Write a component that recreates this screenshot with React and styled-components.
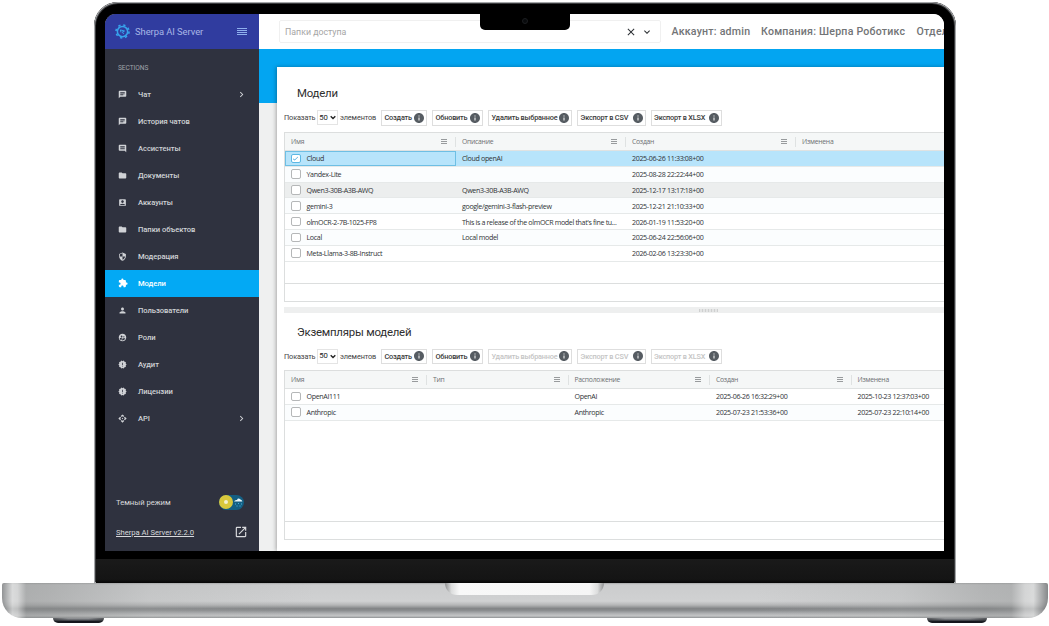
import React from "react";
import styled, { createGlobalStyle, css } from "styled-components";
import {
  MdChat,
  MdComment,
  MdFolder,
  MdAccountBox,
  MdSecurity,
  MdExtension,
  MdPerson,
  MdSupervisedUserCircle,
  MdNewReleases,
  MdApi,
  MdChevronRight,
  MdOpenInNew,
  MdClose,
  MdExpandMore,
  MdInfo,
  MdCheck,
} from "react-icons/md";

const menu = [
  { label: "Чат", icon: MdChat, arrow: true },
  { label: "История чатов", icon: MdChat },
  { label: "Ассистенты", icon: MdComment },
  { label: "Документы", icon: MdFolder },
  { label: "Аккаунты", icon: MdAccountBox },
  { label: "Папки объектов", icon: MdFolder },
  { label: "Модерация", icon: MdSecurity },
  { label: "Модели", icon: MdExtension, active: true },
  { label: "Пользователи", icon: MdPerson },
  { label: "Роли", icon: MdSupervisedUserCircle },
  { label: "Аудит", icon: MdNewReleases },
  { label: "Лицензии", icon: MdNewReleases },
  { label: "API", icon: MdApi, arrow: true },
];

const actions = [
  { label: "Создать", width: 46 },
  { label: "Обновить", width: 51 },
  { label: "Удалить выбранное", width: 84, bulk: true },
  { label: "Экспорт в CSV", width: 68.5, bulk: true },
  { label: "Экспорт в XLSX", width: 71.5, bulk: true },
];

const models = [
  ["Cloud", "Cloud openAI", "2025-06-26 11:33:08+00", ""],
  ["Yandex-Lite", "", "2025-08-28 22:22:44+00", ""],
  ["Qwen3-30B-A3B-AWQ", "Qwen3-30B-A3B-AWQ", "2025-12-17 13:17:18+00", ""],
  ["gemini-3", "google/gemini-3-flash-preview", "2025-12-21 21:10:33+00", ""],
  [
    "olmOCR-2-7B-1025-FP8",
    "This is a release of the olmOCR model that's fine tu...",
    "2026-01-19 11:53:20+00",
    "",
  ],
  ["Local", "Local model", "2025-06-24 22:56:06+00", ""],
  ["Meta-Llama-3-8B-Instruct", "", "2026-02-06 13:23:30+00", ""],
];

const instances = [
  ["OpenAI111", "", "OpenAI", "2025-06-26 16:32:29+00", "2025-10-23 12:37:03+00"],
  ["Anthropic", "", "Anthropic", "2025-07-23 21:53:36+00", "2025-07-23 22:10:14+00"],
];

function Logo() {
  return (
    <svg width="15" height="15" viewBox="0 0 24 24" fill="none" stroke="#37a3ec">
      <circle cx="12" cy="12" r="8.2" strokeWidth="2.4" />
      <circle cx="12" cy="12" r="10.4" strokeWidth="2.6" strokeDasharray="3.6 4.568" />
      <path d="M8.6 9.4l6.6 1.8-3.4 1.4 2 3.4M8.6 9.4l1 4" strokeWidth="1.6" />
    </svg>
  );
}

function Toolbar({ disabled, height }) {
  return (
    <Tools $height={height}>
      <ToolText $width={33}>Показать</ToolText>
      <PageSize>
        50
        <svg width="6" height="5" viewBox="0 0 6 5" fill="none" stroke="#222" strokeWidth="1.4">
          <path d="M.7 1.2L3 3.5l2.3-2.3" />
        </svg>
      </PageSize>
      <ToolText $width={41}>элементов</ToolText>
      <Actions>
        {actions.map((a) => (
          <Action key={a.label} $width={a.width} disabled={disabled && a.bulk}>
            <span>{a.label}</span>
            <MdInfo size={12} color="#565c62" />
          </Action>
        ))}
      </Actions>
    </Tools>
  );
}

function Table({ columns, rows, template, selected, hovered, height }) {
  return (
    <Grid $height={height}>
      <HeadRow $template={template}>
        {columns.map((c, i) => (
          <HeadCell key={c} $last={i === columns.length - 1}>
            {c}
            {i < columns.length - 1 && (
              <svg width="6" height="6" viewBox="0 0 6 6" stroke="#8d9092" strokeWidth=".9">
                <path d="M0 .5h6M0 2.5h6M0 4.5h6" />
              </svg>
            )}
          </HeadCell>
        ))}
      </HeadRow>
      <Body>
        {rows.map((row, r) => (
          <Row
            key={row[0]}
            $template={template}
            $selected={r === selected}
            $hovered={r === hovered}
            $odd={r % 2 === 1}
          >
            {row.map((value, i) => (
              <Cell key={i} $focused={r === selected && i === 0}>
                {i === 0 && (
                  <Checkbox $checked={r === selected}>
                    {r === selected && <MdCheck size={7} />}
                  </Checkbox>
                )}
                {value}
              </Cell>
            ))}
          </Row>
        ))}
      </Body>
      <Footer />
    </Grid>
  );
}

export default function App() {
  return (
    <Page>
      <GlobalStyle />
      <Lid>
        <Notch>
          <Camera />
        </Notch>
        <Screen>
          <Sidebar>
            <Brand>
              <Logo />
              <span>Sherpa AI Server</span>
              <svg width="10" height="8" viewBox="0 0 10 8" stroke="#8fb0ee" strokeWidth="1">
                <path d="M0 .5h10M0 2.5h10M0 4.5h10M0 6.5h10" />
              </svg>
            </Brand>
            <Section>SECTIONS</Section>
            {menu.map(({ label, icon: Icon, arrow, active }) => (
              <MenuItem key={label} $active={active}>
                <Icon size={active ? 10 : 9} />
                <span>{label}</span>
                {arrow && <MdChevronRight size={11} />}
              </MenuItem>
            ))}
            <SidebarFooter>
              <FooterRow>
                <span>Темный режим</span>
                <Toggle>
                  <Sun />
                  <svg width="11" height="13" viewBox="0 0 11 13">
                    <path d="M1 5.5Q2 3.5 4 4Q5 1.5 7.5 3.4Q9 3.6 9.4 5.5Z" fill="#e7f5fb" />
                    <path d="M2 8h1M5 7.5h1M8 8h1M3.5 10h1M6.5 10h1" stroke="#48b4e0" />
                  </svg>
                </Toggle>
              </FooterRow>
              <FooterRow>
                <u>Sherpa AI Server v2.2.0</u>
                <MdOpenInNew size={14} />
              </FooterRow>
            </SidebarFooter>
          </Sidebar>
          <Main>
            <TopBar>
              <AccessSelect>
                <span>Папки доступа</span>
                <MdClose size={12} />
                <MdExpandMore size={12} />
              </AccessSelect>
              <Info $width={79}>Аккаунт: admin</Info>
              <Info $width={145}>Компания: Шерпа Роботикс</Info>
              <Info $width={30}>Отдел</Info>
            </TopBar>
            <Content>
              <Card>
                <Title $height={43}>Модели</Title>
                <Toolbar height={22} />
                <Table
                  columns={["Имя", "Описание", "Создан", "Изменена"]}
                  rows={models}
                  template="171px 170px 170px 170px"
                  selected={0}
                  hovered={2}
                  height={169.5}
                />
                <Splitter>
                  <i />
                </Splitter>
                <Title $height={35.5}>Экземпляры моделей</Title>
                <Toolbar height={21.5} disabled />
                <Table
                  columns={["Имя", "Тип", "Расположение", "Создан", "Изменена"]}
                  rows={instances}
                  template="142px 141.5px 141.5px 141.5px 141.5px"
                  height={169.5}
                />
              </Card>
            </Content>
          </Main>
        </Screen>
        <Chin />
      </Lid>
      <Base>
        <Groove />
      </Base>
      <Feet>
        <Foot $width={51} />
        <Foot $width={60} />
      </Feet>
    </Page>
  );
}

const GlobalStyle = createGlobalStyle`
  body {
    margin: 0;
    background: #fff;
  }

  * {
    box-sizing: border-box;
  }
`;

const Page = styled.div`
  width: 1049px;
  height: 626px;
  padding-top: 2px;
  overflow: hidden;
  font-family: Roboto, sans-serif;
`;

const Lid = styled.div`
  position: relative;
  width: 862px;
  height: 581px;
  margin-left: 94px;
  padding: 12px 11px 0;
  display: flex;
  flex-direction: column;
  justify-content: space-between;
  background: #000;
  border-radius: 24px 24px 0 0;
  box-shadow: inset 0 0 0 1px #a5a7a9, inset 0 0 0 2px #3a3b3d;
`;

const Notch = styled.div`
  position: absolute;
  z-index: 2;
  top: 11px;
  left: 386px;
  width: 90px;
  height: 17px;
  display: flex;
  justify-content: center;
  padding-top: 5px;
  background: #000;
  border-radius: 0 0 5px 5px;
`;

const Camera = styled.div`
  width: 6px;
  height: 6px;
  border-radius: 50%;
  background: #080a0c;
  border: 1px solid #1b1d20;
`;

const Screen = styled.div`
  width: 839px;
  height: 536.5px;
  display: flex;
  overflow: hidden;
  background: #fff;
  border-radius: 11px 11px 0 0;
`;

const Chin = styled.div`
  height: 24px;
  margin: 0 -9px;
  background: linear-gradient(#1a1a1a, #141414 85%, #050505);
`;

const Base = styled.div`
  width: 1046px;
  height: 35px;
  margin-left: 2px;
  display: flex;
  justify-content: center;
  border-radius: 2px 2px 20px 20px;
  background: linear-gradient(
      90deg,
      rgba(120, 122, 124, 0.7),
      rgba(222, 223, 223, 0.75) 1%,
      rgba(215, 216, 216, 0.7) 1.5%,
      rgba(140, 142, 142, 0.5) 2.3%,
      rgba(140, 142, 142, 0.45) 4.5%,
      rgba(170, 172, 172, 0.25) 14%,
      transparent 30%,
      transparent 72%,
      rgba(170, 172, 172, 0.25) 86%,
      rgba(140, 142, 142, 0.4) 94%,
      rgba(150, 152, 152, 0.5) 96.5%,
      rgba(215, 216, 216, 0.7) 97.8%,
      rgba(222, 223, 223, 0.7) 98.6%,
      rgba(110, 112, 114, 0.75)
    ),
    linear-gradient(
      #a6a7a8,
      #cbcccd 5%,
      #d0d1d2 52%,
      #b4b5b6 63%,
      #828486 73%,
      #898b8d 78%,
      #b3b4b6 88%,
      #c4c5c6 94%,
      #8e9092
    );
`;

const Groove = styled.div`
  width: 159px;
  height: 12px;
  margin-right: 1px;
  border-radius: 0 0 12px 12px;
  background: linear-gradient(
    90deg,
    #8f9091,
    #dcdddd 4%,
    #f8f8f8 9%,
    #f5f5f5 91%,
    #dcdddd 96%,
    #8f9091
  );
`;

const Feet = styled.div`
  display: flex;
  justify-content: space-between;
  padding: 0 62px 0 53px;
`;

const Foot = styled.div`
  width: ${(p) => p.$width}px;
  height: 5px;
  border-radius: 0 0 8px 8px;
  background: linear-gradient(90deg, #25272b88, transparent 30%, transparent 70%, #25272b88),
    linear-gradient(#9c9ea1, #55585d 45%, #14161c 65%);
`;

const Sidebar = styled.aside`
  width: 154px;
  flex-shrink: 0;
  display: flex;
  flex-direction: column;
  background: #2f323f;
  color: #d9dadd;
`;

const Brand = styled.div`
  height: 35px;
  display: flex;
  align-items: center;
  padding: 0 12px 0 10px;
  background: #303c9f;
  color: #a9b7e6;
  font-size: 9.4px;

  span {
    flex: 1;
    margin-left: 5px;
    letter-spacing: -0.05px;
  }
`;

const Section = styled.div`
  height: 31.5px;
  padding: 14px 13px 0;
  font-size: 6.6px;
  line-height: 10px;
  letter-spacing: -0.05px;
  color: #a0a2a9;
`;

const MenuItem = styled.div`
  height: 27px;
  display: flex;
  align-items: center;
  padding: 0 12px 0 13px;
  font-size: 7.6px;
  font-weight: 500;
  letter-spacing: -0.06px;
  background: ${(p) => (p.$active ? "#03a9f4" : "transparent")};
  color: ${(p) => (p.$active ? "#fff" : "#d0d2d6")};

  span {
    flex: 1;
    margin-left: ${(p) => (p.$active ? 10 : 11)}px;
  }
`;

const SidebarFooter = styled.div`
  margin-top: auto;
  padding: 0 11px 3.5px;
`;

const FooterRow = styled.div`
  height: 30px;
  display: flex;
  align-items: center;
  justify-content: space-between;
  font-size: 7.7px;
  letter-spacing: -0.05px;
  white-space: nowrap;
`;

const Toggle = styled.div`
  width: 25px;
  height: 15px;
  margin-right: 4px;
  display: flex;
  align-items: center;
  background: #145f83;
  border-radius: 8px;
`;

const Sun = styled.div`
  width: 14px;
  height: 14px;
  flex-shrink: 0;
  border-radius: 50%;
  border: 5px solid #d9c83c;
  background: #f4f1d0;
`;

const Main = styled.main`
  flex: 1;
  min-width: 0;
  display: flex;
  flex-direction: column;
`;

const TopBar = styled.header`
  height: 35px;
  flex-shrink: 0;
  display: flex;
  align-items: center;
  padding-left: 20px;
  gap: 10.5px;
  background: #fff;
`;

const AccessSelect = styled.div`
  width: 382px;
  height: 23px;
  flex-shrink: 0;
  display: flex;
  align-items: center;
  gap: 4px;
  padding: 0 7px 0 5px;
  border: 1px solid #f0f0f0;
  border-radius: 2px;
  color: #2c3034;

  span {
    flex: 1;
    font-size: 8.8px;
    color: #a5a5a5;
  }
`;

const Info = styled.span`
  width: ${(p) => p.$width}px;
  flex-shrink: 0;
  font-size: 10.6px;
  font-weight: 500;
  letter-spacing: 0.22px;
  white-space: nowrap;
  color: #727476;
`;

const Content = styled.div`
  flex: 1;
  padding: 18px 0 0 18px;
  background: linear-gradient(#03a5f1 54px, #eff0f0 54px);
`;

const Card = styled.section`
  height: 100%;
  padding: 0 0 0 7px;
  background: #fff;
  box-shadow: -1px 0 4px rgba(0, 0, 0, 0.3);
`;

const Title = styled.h2`
  height: ${(p) => p.$height}px;
  margin: 0;
  padding: 0 0 9px 13px;
  display: flex;
  align-items: flex-end;
  font-size: 11.4px;
  line-height: 16px;
  letter-spacing: -0.22px;
  font-weight: 400;
  color: #2e2e2e;
`;

const Tools = styled.div`
  height: ${(p) => p.$height}px;
  display: flex;
  align-items: flex-start;
  line-height: 16px;
`;

const ToolText = styled.span`
  width: ${(p) => p.$width}px;
  font-size: 7.3px;
  letter-spacing: -0.12px;
  white-space: nowrap;
  color: #444;
`;

const PageSize = styled.div`
  width: 21px;
  height: 15px;
  display: flex;
  align-items: center;
  justify-content: center;
  gap: 2px;
  border: 1px solid #e4e4e4;
  font-size: 7.7px;
  color: #222;

  & + span {
    padding-left: 2px;
  }
`;

const Actions = styled.div`
  display: flex;
  gap: 5px;
  margin-left: 2px;
`;

const Action = styled.button`
  width: ${(p) => p.$width}px;
  height: 15.5px;
  display: flex;
  align-items: center;
  justify-content: space-between;
  padding: 0 1px 0 2.5px;
  border: 1px solid #dedede;
  background: #fff;
  font-family: Roboto, sans-serif;
  font-size: 7.3px;
  font-weight: 500;
  letter-spacing: -0.18px;
  white-space: nowrap;
  color: ${(p) => (p.disabled ? "#c4c4c4" : "#3a3a3a")};
`;

const Grid = styled.div`
  height: ${(p) => p.$height}px;
  display: flex;
  flex-direction: column;
  border: 1px solid #dcdede;
  border-right: none;
  overflow: hidden;
`;

const rowLayout = css`
  display: grid;
  grid-template-columns: ${(p) => p.$template};
  white-space: nowrap;
  font-family: "Open Sans", "Noto Sans", sans-serif;
  letter-spacing: -0.35px;
`;

const HeadRow = styled.div`
  ${rowLayout}
  height: 18px;
  flex-shrink: 0;
  align-items: center;
  background: #f5f7f7;
  border-bottom: 1px solid #dfe2e2;
  font-size: 6.8px;
  letter-spacing: -0.25px;
  color: #6d7072;
`;

const HeadCell = styled.div`
  height: 10px;
  display: flex;
  align-items: center;
  justify-content: space-between;
  padding: 0 8px 0 6px;
  border-right: ${(p) => (p.$last ? "none" : "1px solid #dfe2e2")};
`;

const Body = styled.div`
  flex: 1;
`;

const Row = styled.div`
  ${rowLayout}
  height: 15.8px;
  font-size: 7.1px;
  color: #303336;
  border-bottom: 1px solid #e6e9e9;
  background: ${(p) =>
    p.$selected ? "#b7e4fb" : p.$hovered ? "#eceeee" : p.$odd ? "#fbfdfe" : "#fff"};
`;

const Cell = styled.div`
  display: flex;
  align-items: center;
  padding-left: 6px;
  border: ${(p) => (p.$focused ? "1px solid #6ebfe4" : "none")};
  ${(p) => p.$focused && "padding-left: 5px;"}
`;

const Checkbox = styled.span`
  width: 9.5px;
  height: 9.5px;
  margin-right: 6px;
  display: flex;
  align-items: center;
  justify-content: center;
  background: #fff;
  border: 1px solid ${(p) => (p.$checked ? "#5cb8e4" : "#b5b7b8")};
  border-radius: 2px;
  color: #2196d3;
`;

const Footer = styled.div`
  height: 18px;
  border-top: 1px solid #dcdede;
`;

const Splitter = styled.div`
  height: 6px;
  margin-top: 5.5px;
  display: flex;
  align-items: center;
  background: #eeefef;

  i {
    width: 19px;
    height: 3px;
    margin-left: 415px;
    background: repeating-linear-gradient(90deg, #cfd0d0 0 1px, #e4e5e5 1px 3px);
  }
`;
